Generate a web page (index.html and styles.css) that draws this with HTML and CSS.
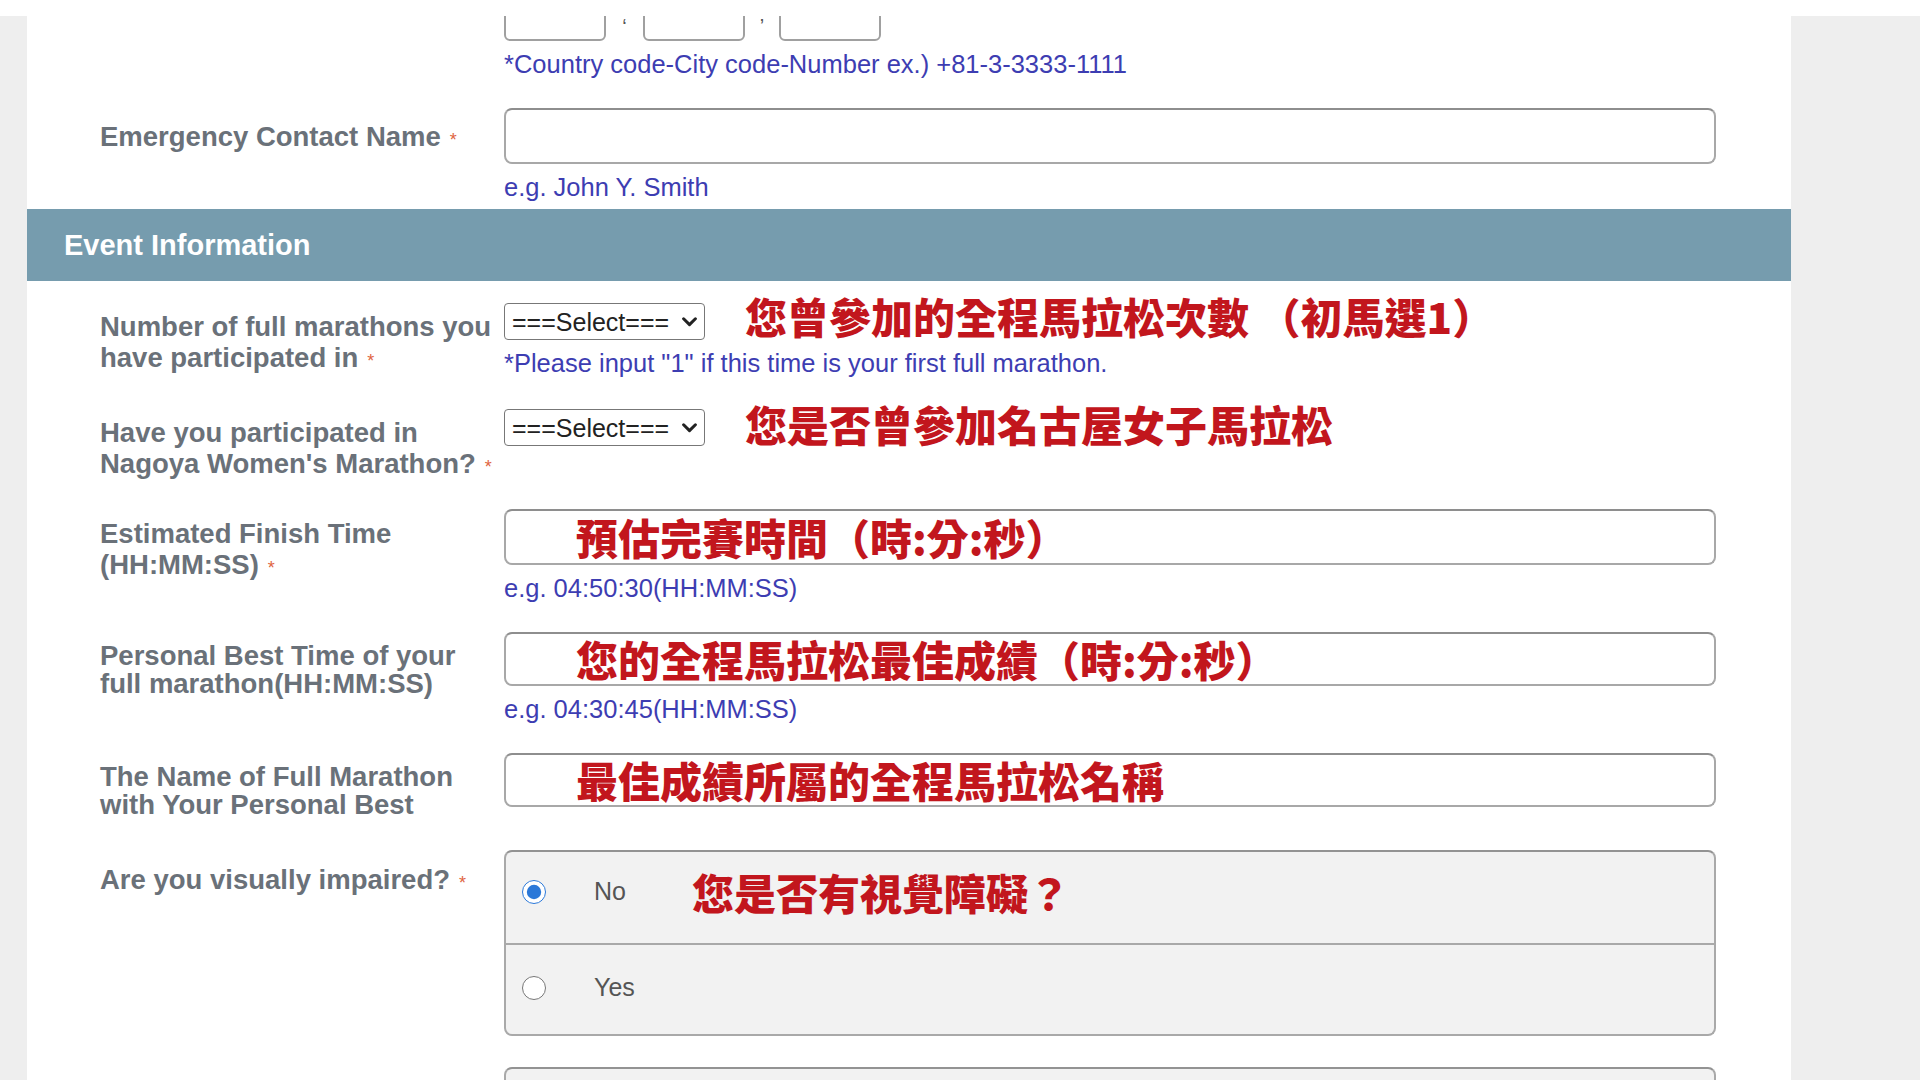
FILE: index.html
```html
<!DOCTYPE html>
<html lang="en">
<head>
    <meta charset="UTF-8">
    <meta name="viewport" content="width=device-width, initial-scale=1.0">
    <title>Entry Form</title>
    <link rel="stylesheet" href="styles.css">
</head>
<body>
    <div class="top-strip"></div>

    <div class="panel">
        <!-- Phone number (scrolled partly out of view) -->
        <div class="row">
            <div class="label"></div>
            <div class="control">
                <div class="phone">
                    <input type="text" class="phone-part">
                    <span class="phone-sep">‘</span>
                    <input type="text" class="phone-part">
                    <span class="phone-sep">’</span>
                    <input type="text" class="phone-part">
                </div>
                <div class="hint">*Country code-City code-Number ex.) +81-3-3333-1111</div>
            </div>
        </div>

        <!-- Emergency contact -->
        <div class="row">
            <div class="label label-single">Emergency Contact Name<span class="req">*</span></div>
            <div class="control">
                <div class="text-box"></div>
                <div class="hint">e.g. John Y. Smith</div>
            </div>
        </div>

        <div class="section-head">Event Information</div>

        <div class="row">
            <div class="label label-select">Number of full marathons you<br>have participated in<span class="req">*</span></div>
            <div class="control">
                <div class="select-line">
                    <div class="select-wrap">
                        <select class="select">
                            <option>===Select===</option>
                        </select>
                        <svg class="chevron" viewBox="0 0 14 9" width="14" height="9"><path d="M1.5 1.5 L7 7 L12.5 1.5" fill="none" stroke="#222" stroke-width="2.8" stroke-linecap="round" stroke-linejoin="round"/></svg>
                    </div>
                    <span class="note">您曾參加的全程馬拉松次數 （初馬選1）</span>
                </div>
                <div class="hint">*Please input "1" if this time is your first full marathon.</div>
            </div>
        </div>

        <div class="row row-select">
            <div class="label label-select">Have you participated in<br>Nagoya Women's Marathon?<span class="req">*</span></div>
            <div class="control">
                <div class="select-line">
                    <div class="select-wrap">
                        <select class="select">
                            <option>===Select===</option>
                        </select>
                        <svg class="chevron" viewBox="0 0 14 9" width="14" height="9"><path d="M1.5 1.5 L7 7 L12.5 1.5" fill="none" stroke="#222" stroke-width="2.8" stroke-linecap="round" stroke-linejoin="round"/></svg>
                    </div>
                    <span class="note">您是否曾參加名古屋女子馬拉松</span>
                </div>
            </div>
        </div>

        <div class="row row-close">
            <div class="label">Estimated Finish Time<br>(HH:MM:SS)<span class="req">*</span></div>
            <div class="control">
                <div class="text-box"><span class="note">預估完賽時間（時:分:秒）</span></div>
                <div class="hint">e.g. 04:50:30(HH:MM:SS)</div>
            </div>
        </div>

        <div class="row">
            <div class="label label-tight">Personal Best Time of your<br>full marathon(HH:MM:SS)</div>
            <div class="control">
                <div class="text-box text-box-short"><span class="note">您的全程馬拉松最佳成績（時:分:秒）</span></div>
                <div class="hint">e.g. 04:30:45(HH:MM:SS)</div>
            </div>
        </div>

        <div class="row">
            <div class="label label-tight">The Name of Full Marathon<br>with Your Personal Best</div>
            <div class="control">
                <div class="text-box text-box-short"><span class="note">最佳成績所屬的全程馬拉松名稱</span></div>
            </div>
        </div>

        <div class="row row-spaced">
            <div class="label label-choice">Are you visually impaired?<span class="req">*</span></div>
            <div class="control">
                <div class="choice-box">
                    <label class="choice">
                        <input type="radio" name="impaired" checked>
                        <span class="choice-text">No</span>
                        <span class="note">您是否有視覺障礙？</span>
                    </label>
                    <label class="choice">
                        <input type="radio" name="impaired">
                        <span class="choice-text">Yes</span>
                    </label>
                </div>
            </div>
        </div>

        <div class="row row-spaced">
            <div class="label"></div>
            <div class="control">
                <div class="choice-box next-box"></div>
            </div>
        </div>
    </div>
</body>
</html>
```

FILE: styles.css
```css
body {
    margin: 0;
    padding: 0;
    background-color: #eeeeee;
    font-family: "Liberation Sans", Arial, sans-serif;
}

.top-strip {
    height: 16px;
    background-color: #fff;
}

.panel {
    margin-left: 27px;
    width: 1764px;
    background-color: #fff;
    padding-bottom: 40px;
}

.row {
    display: grid;
    grid-template-columns: 404px 1212px;
    padding-left: 73px;
}

.row + .row {
    margin-top: 29px;
}

.row + .row-select {
    margin-top: 31px;
}

.row.row-close {
    margin-top: 26px;
}

.row.row-spaced {
    margin-top: 31px;
}

.label {
    font-size: 27.5px;
    font-weight: bold;
    color: #6a7179;
    line-height: 31px;
    padding-top: 9px;
}

.label-single {
    padding-top: 13px;
}

.label-select {
    padding-top: 8px;
}

.label-tight {
    line-height: 28px;
    padding-top: 10px;
}

.label-choice {
    padding-top: 14px;
}

.req {
    font-size: 18px;
    font-weight: normal;
    color: #e0653f;
    margin-left: 9px;
}

.hint {
    font-size: 25.5px;
    line-height: 30px;
    color: #3d3db2;
    margin-top: 8px;
}

/* phone inputs, top cut off by the scroll */
.phone {
    display: flex;
    align-items: flex-end;
    height: 25px;
    overflow: hidden;
}

.phone-part {
    width: 102px;
    height: 50px;
    box-sizing: border-box;
    border: 2px solid #a0a0a0;
    border-radius: 6px;
    flex-shrink: 0;
}

.phone-sep {
    width: 37px;
    align-self: flex-start;
    text-align: center;
    font-size: 20px;
    line-height: 20px;
    color: #555;
}

.phone-sep:nth-child(4) {
    width: 34px;
}

.text-box {
    height: 56px;
    box-sizing: border-box;
    border: 2px solid #a8a8a8;
    border-top-color: #8e8e8e;
    border-radius: 8px;
    background-color: #fff;
    display: flex;
    align-items: center;
    padding-left: 70px;
}

.text-box-short {
    height: 54px;
}

.text-box .note {
    margin-left: 0;
}

.note {
    margin-left: 40px;
    color: #c2161d;
    font-family: "Noto Sans CJK TC", "Noto Sans CJK SC", sans-serif;
    font-weight: 900;
    font-size: 42px;
    line-height: 42px;
    white-space: nowrap;
}

.select-line {
    display: flex;
    align-items: center;
    height: 37px;
}

.select-line .note {
    position: relative;
    top: -6px;
}

.row-select .select-line .note {
    top: -4px;
}

.section-head {
    margin-top: 7px;
    height: 72px;
    background-color: #769cae;
    color: #fff;
    font-size: 29px;
    font-weight: bold;
    display: flex;
    align-items: center;
    padding-left: 37px;
}

.section-head + .row {
    margin-top: 22px;
}

.select-wrap {
    position: relative;
    flex-shrink: 0;
}

.select {
    display: block;
    width: 201px;
    height: 37px;
    font-family: "Liberation Sans", Arial, sans-serif;
    font-size: 25px;
    color: #222;
    border: 1.5px solid #777;
    border-radius: 4px;
    background-color: #fff;
    padding: 0 0 0 7px;
    appearance: none;
    -webkit-appearance: none;
}

.chevron {
    position: absolute;
    right: 8px;
    top: 14px;
    width: 15px;
    height: 10px;
    pointer-events: none;
}

.choice-box {
    border: 2px solid #a9a9a9;
    border-top-color: #939393;
    border-radius: 8px;
    background-color: #f2f2f2;
}

.next-box {
    height: 60px;
    border-bottom: none;
}

.choice {
    display: flex;
    align-items: center;
    height: 91px;
    box-sizing: border-box;
    padding-left: 16px;
    padding-bottom: 4px;
}

.choice:first-child {
    padding-bottom: 12px;
}

.choice + .choice {
    border-top: 2px solid #a9a9a9;
}

.choice input {
    width: 24px;
    height: 24px;
    margin: 0;
    accent-color: #2b78d8;
}

.choice-text {
    margin-left: 48px;
    font-size: 25px;
    color: #555;
}

.choice .note {
    margin-left: 66px;
}
```
